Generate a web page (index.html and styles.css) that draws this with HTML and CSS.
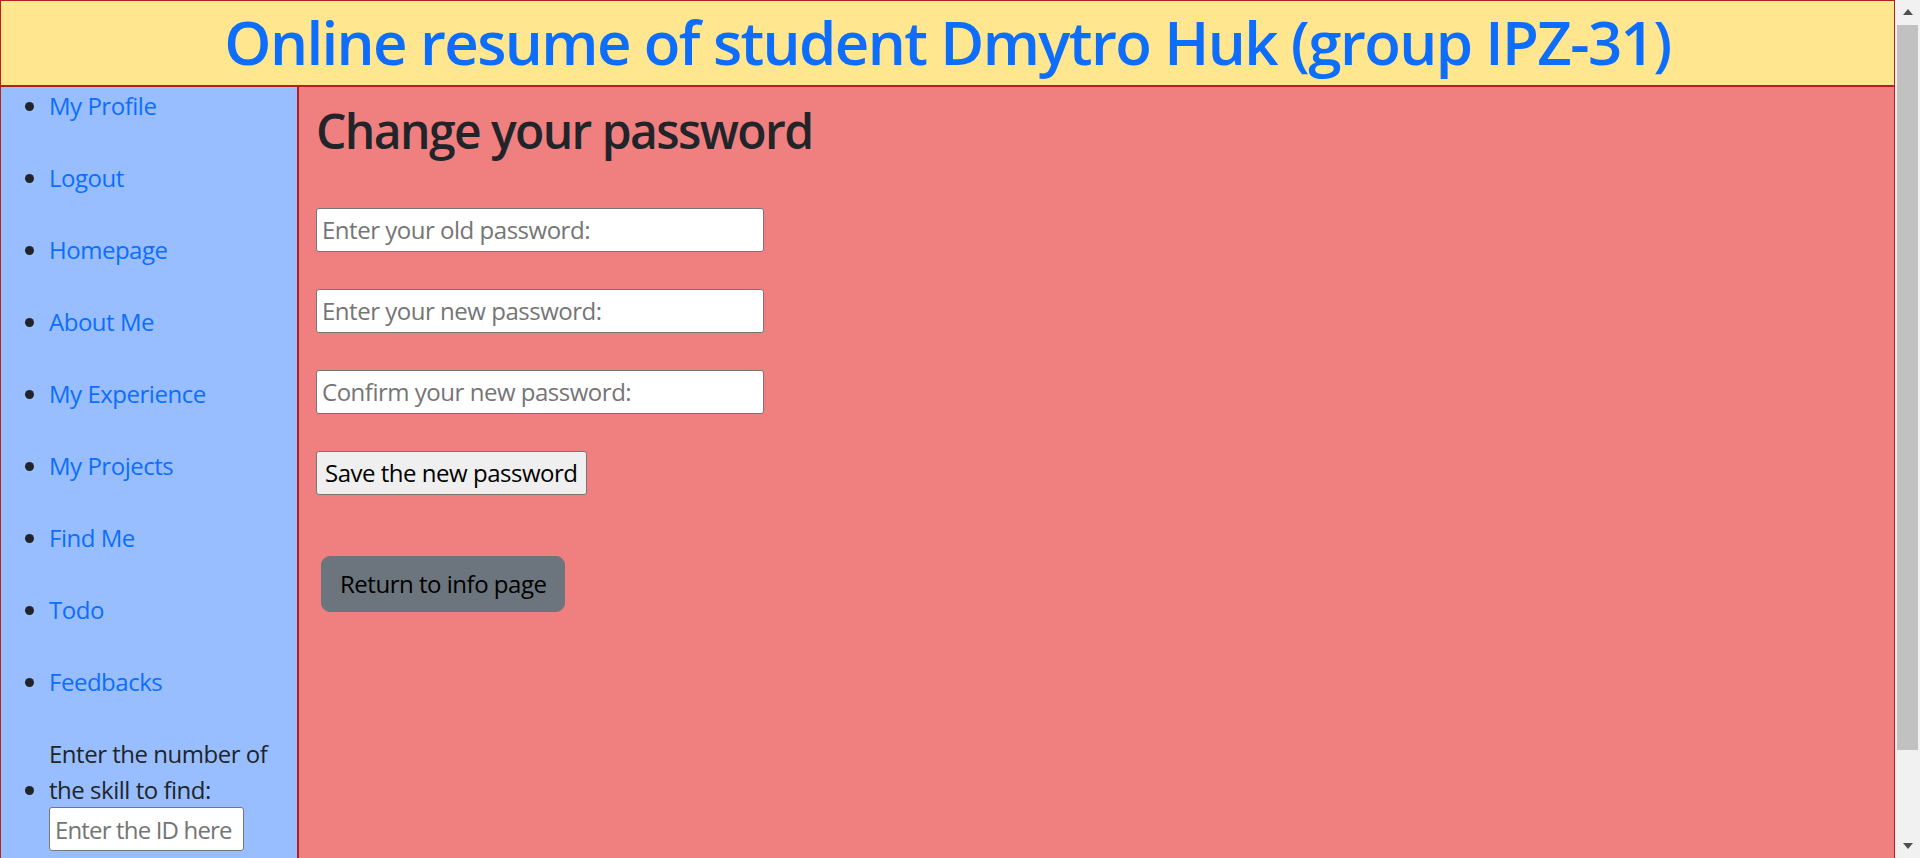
FILE: index.html
```html
<!DOCTYPE html>
<html lang="en">
<head>
<meta charset="utf-8">
<title>Change your password</title>
<link rel="stylesheet" href="styles.css">
</head>
<body>
<div class="viewport">
  <header class="site-header">
    <h1 class="site-title">Online resume of student Dmytro Huk (group IPZ-31)</h1>
  </header>
  <div class="layout">
    <nav class="sidebar">
      <ul class="nav-list">
        <li><a href="#">My Profile</a></li>
        <li><a href="#">Logout</a></li>
        <li><a href="#">Homepage</a></li>
        <li><a href="#">About Me</a></li>
        <li><a href="#">My Experience</a></li>
        <li><a href="#">My Projects</a></li>
        <li><a href="#">Find Me</a></li>
        <li><a href="#">Todo</a></li>
        <li><a href="#">Feedbacks</a></li>
        <li><span class="find-label">Enter the number of the skill to find:</span><input class="find-input" type="text" placeholder="Enter the ID here"></li>
      </ul>
    </nav>
    <main class="content">
      <h2 class="page-title">Change your password</h2>
      <form class="pw-form">
        <input class="pw-input" type="password" placeholder="Enter your old password:">
        <input class="pw-input" type="password" placeholder="Enter your new password:">
        <input class="pw-input" type="password" placeholder="Confirm your new password:">
        <button class="save-btn" type="button">Save the new password</button>
      </form>
      <a class="return-btn" href="#">Return to info page</a>
    </main>
  </div>
</div>
<div class="scrollbar" aria-hidden="true">
  <span class="sb-btn"><span class="sb-arrow-up"></span></span>
  <span class="sb-track"><span class="sb-thumb"></span></span>
  <span class="sb-btn"><span class="sb-arrow-down"></span></span>
</div>
</body>
</html>
```

FILE: styles.css
```css
* { box-sizing: border-box; }

html { background: #ffffff; }

body {
  margin: 0;
  height: 100vh;
  overflow: hidden;
  display: flex;
  font-family: "Open Sans", "Noto Sans", sans-serif;
  font-size: 24px;
  line-height: 36px;
  color: #212529;
  letter-spacing: -0.02em;
}

.viewport {
  flex: 1;
  min-width: 0;
  height: 100%;
  overflow: hidden;
}

/* scrollbar */
.scrollbar {
  width: 25px;
  flex: none;
  height: 100%;
  background: #f1f1f1;
  display: flex;
  flex-direction: column;
}
.sb-btn {
  height: 25px;
  flex: none;
  display: flex;
  align-items: center;
  justify-content: center;
}
.sb-arrow-up {
  width: 0;
  height: 0;
  border-left: 5.5px solid transparent;
  border-right: 5.5px solid transparent;
  border-bottom: 6px solid #505050;
  margin-top: -1px;
}
.sb-arrow-down {
  width: 0;
  height: 0;
  border-left: 5.5px solid transparent;
  border-right: 5.5px solid transparent;
  border-top: 6px solid #505050;
  margin-top: 1px;
}
.sb-track {
  flex: 1;
  display: flex;
  flex-direction: column;
  padding: 0 2px;
}
.sb-thumb {
  height: 725px;
  background: #c1c1c1;
}

/* header */
.site-header {
  height: 86px;
  border: 1px solid #b22222;
  background: #ffe68f;
  display: flex;
  justify-content: center;
  align-items: flex-start;
  padding-top: 5px;
}

.site-title {
  margin: 0;
  font-size: 60px;
  line-height: 72px;
  font-weight: 600;
  letter-spacing: -0.027em;
  color: #0d6efd;
}

.layout {
  display: flex;
  min-height: 879px;
  border: 1px solid #b22222;
}

.sidebar {
  width: 298px;
  flex: none;
  background: #99beff;
  border-right: 2px solid #b22222;
}

.nav-list {
  margin: 0;
  padding: 1px 0 0 48px;
}

.nav-list li { margin-bottom: 36px; }

.nav-list a {
  color: #0d6efd;
  text-decoration: none;
}

.find-label { display: inline-block; }

.find-input {
  display: block;
  width: 195px;
  height: 44px;
  margin: -1px 0 0;
  padding: 0 5px;
  border: 1px solid #767676;
  border-radius: 3px;
  font-family: inherit;
  font-size: 24px;
  letter-spacing: -0.035em;
  background: #ffffff;
}

.content {
  flex: 1;
  background: #f08080;
  padding: 15px 17px;
  display: flex;
  flex-direction: column;
  align-items: flex-start;
}

.page-title {
  margin: 0 0 48px;
  font-size: 48px;
  line-height: 57.6px;
  font-weight: 600;
  letter-spacing: -0.033em;
  color: #212529;
}

.pw-form {
  display: flex;
  flex-direction: column;
  align-items: flex-start;
  gap: 37px;
  margin: 0;
}

.pw-input {
  width: 448px;
  height: 44px;
  margin: 0;
  padding: 0 5px;
  border: 1px solid #767676;
  border-radius: 3px;
  font-family: inherit;
  font-size: 24px;
  letter-spacing: inherit;
  background: #ffffff;
}

.pw-input::placeholder, .find-input::placeholder { color: #757575; }

.save-btn {
  height: 44px;
  margin: 0;
  padding: 0 8px;
  border: 1px solid #767676;
  border-radius: 3px;
  background: #efefef;
  color: #000000;
  font-family: inherit;
  font-size: 24px;
  letter-spacing: inherit;
}

.return-btn {
  margin: 61px 0 0 5px;
  padding: 9px 18px;
  line-height: 36px;
  border: 1px solid #6c757d;
  border-radius: 9px;
  background: #6c757d;
  color: #000000;
  text-decoration: none;
}
```
